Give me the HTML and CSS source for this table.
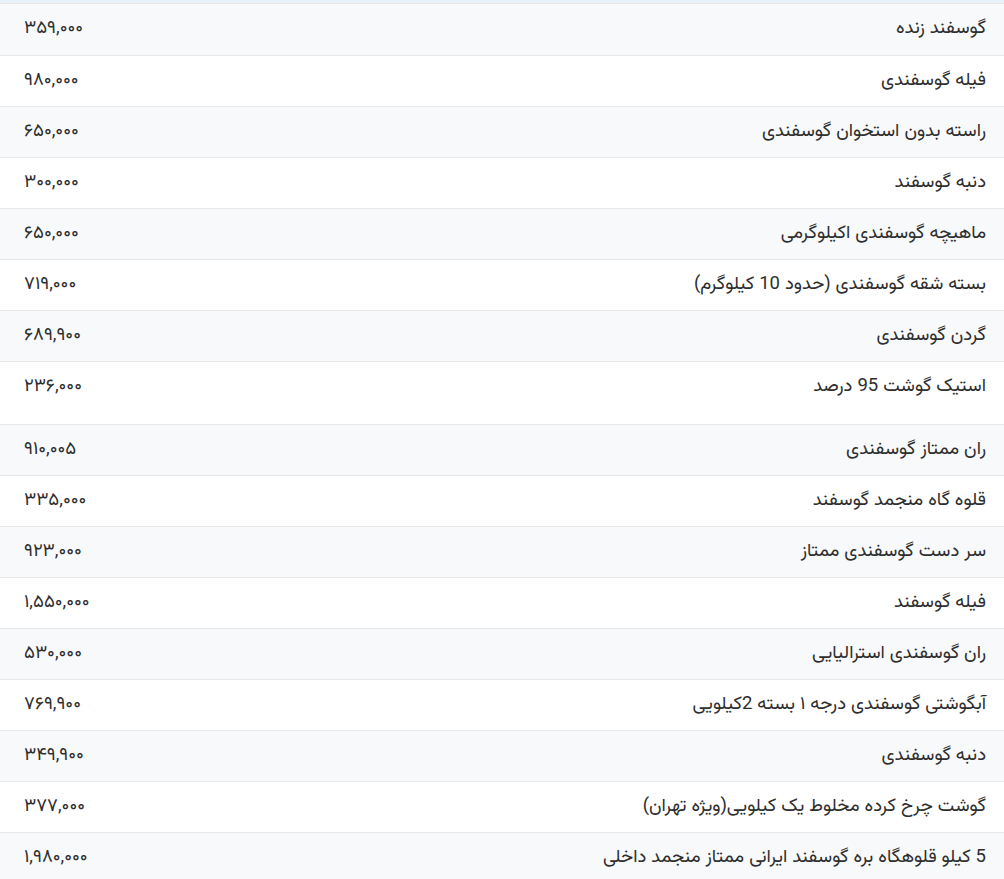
FILE: index.html
```html
<!DOCTYPE html>
<html lang="fa" dir="rtl">
<head>
<meta charset="utf-8">
<link rel="stylesheet" href="styles.css">
</head>
<body>
<div class="top-strip"></div>
<table class="prices">
<tbody>
<tr><td class="name">گوسفند زنده</td><td class="price">۳۵۹,۰۰۰</td></tr>
<tr><td class="name">فیله گوسفندی</td><td class="price">۹۸۰,۰۰۰</td></tr>
<tr><td class="name">راسته بدون استخوان گوسفندی</td><td class="price">۶۵۰,۰۰۰</td></tr>
<tr><td class="name">دنبه گوسفند</td><td class="price">۳۰۰,۰۰۰</td></tr>
<tr><td class="name">ماهیچه گوسفندی اکیلوگرمی</td><td class="price">۶۵۰,۰۰۰</td></tr>
<tr><td class="name">بسته شقه گوسفندی (حدود 10 کیلوگرم)</td><td class="price">۷۱۹,۰۰۰</td></tr>
<tr><td class="name">گردن گوسفندی</td><td class="price">۶۸۹,۹۰۰</td></tr>
<tr class="tall"><td class="name">استیک گوشت 95 درصد</td><td class="price">۲۳۶,۰۰۰</td></tr>
<tr><td class="name">ران ممتاز گوسفندی</td><td class="price">۹۱۰,۰۰۵</td></tr>
<tr><td class="name">قلوه گاه منجمد گوسفند</td><td class="price">۳۳۵,۰۰۰</td></tr>
<tr><td class="name">سر دست گوسفندی ممتاز</td><td class="price">۹۲۳,۰۰۰</td></tr>
<tr><td class="name">فیله گوسفند</td><td class="price">۱,۵۵۰,۰۰۰</td></tr>
<tr><td class="name">ران گوسفندی استرالیایی</td><td class="price">۵۳۰,۰۰۰</td></tr>
<tr><td class="name">آبگوشتی گوسفندی درجه ۱ بسته 2کیلویی</td><td class="price">۷۶۹,۹۰۰</td></tr>
<tr><td class="name">دنبه گوسفندی</td><td class="price">۳۴۹,۹۰۰</td></tr>
<tr><td class="name">گوشت چرخ کرده مخلوط یک کیلویی(ویژه تهران)</td><td class="price">۳۷۷,۰۰۰</td></tr>
<tr><td class="name">5 کیلو قلوهگاه بره گوسفند ایرانی ممتاز منجمد داخلی</td><td class="price">۱,۹۸۰,۰۰۰</td></tr>
</tbody>
</table>
</body>
</html>
```
FILE: styles.css
```css
html, body {
  margin: 0;
  padding: 0;
  background: #ffffff;
}
body {
  font-family: "Vazirmatn", "Vazir", "Noto Sans Arabic", "Noto Naskh Arabic", "DejaVu Sans", sans-serif;
  font-size: 18.5px;
  color: #2e2e2e;
}
.top-strip {
  height: 3px;
  background: #e8f0f9;
  border-bottom: 1px solid #e6e8ec;
}
.prices {
  width: 100%;
  border-collapse: collapse;
}
.prices tr {
  height: 51px;
  border-bottom: 1px solid #e6e8ec;
}
.prices tr:nth-child(odd) {
  background: #f8f9fb;
}
.prices td {
  padding: 1px 0 0;
  vertical-align: top;
  line-height: 47px;
}
.prices .name {
  text-align: right;
  padding-right: 18px;
}
.prices .price {
  text-align: left;
  padding-left: 24px;
  width: 200px;
}
.prices tr.tall {
  height: 63px;
}
```
